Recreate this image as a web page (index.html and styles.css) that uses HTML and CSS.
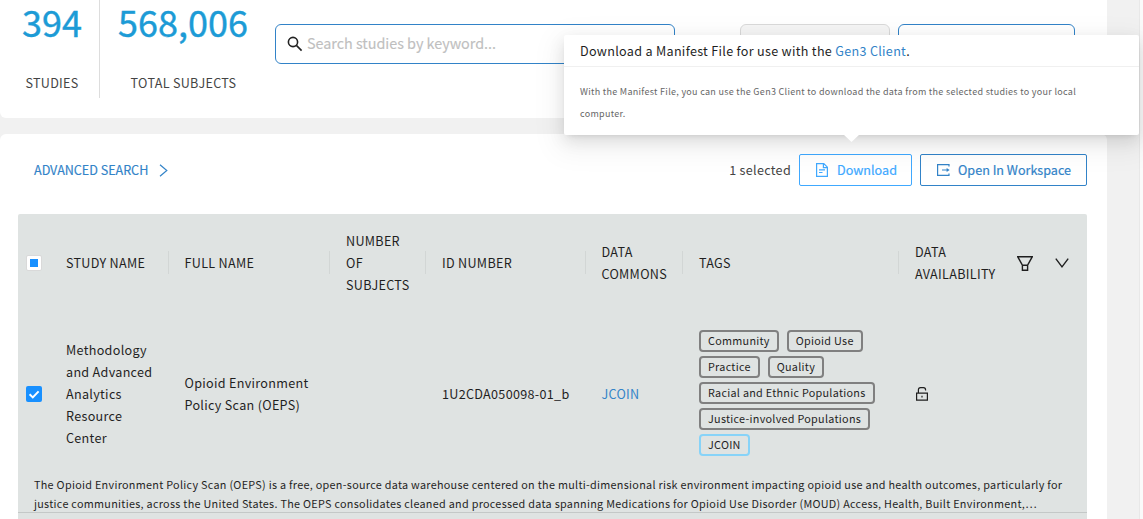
FILE: index.html
```html
<!DOCTYPE html>
<html lang="en">
<head>
<meta charset="utf-8">
<title>Study Discovery</title>
<link rel="stylesheet" href="styles.css">
</head>
<body>
<div class="page">
  <main class="content">
    <header class="summary">
      <div class="stat stat-studies"><div class="stat-number">394</div><div class="stat-label">STUDIES</div></div>
      <div class="stat stat-subjects"><div class="stat-number">568,006</div><div class="stat-label">TOTAL SUBJECTS</div></div>
      <div class="search-box">
        <svg class="icon-search" width="16" height="16" viewBox="0 0 16 16"><circle cx="6" cy="6" r="4.6"/><path d="M9.4 9.4L14.6 14.6"/></svg>
        <span class="placeholder">Search studies by keyword...</span>
      </div>
      <div class="summary-button is-disabled"></div>
      <div class="summary-button is-active"></div>
    </header>

    <section class="studies">
      <div class="toolbar">
        <a class="advanced">ADVANCED SEARCH <svg width="9" height="13" viewBox="0 0 9 13"><path d="M1 .8L7.8 6.5L1 12.2"/></svg></a>
        <div class="actions">
          <span class="selected-count">1 selected</span>
          <button class="btn btn-download"><svg width="12" height="14" viewBox="0 0 12 14"><path d="M.6 .6H7.8L11.4 4.2V13.4H.6ZM7.4 .8V4.6H11.2M3 6.9H9M3 9.5H6.5"/></svg><span>Download</span></button>
          <button class="btn btn-workspace"><svg width="13" height="12" viewBox="0 0 13 12"><path d="M12 2.6V.6H.6V11.4H12V9.4M5 6H11"/><path class="solid" d="M9.6 4L12.6 6L9.6 8Z"/></svg><span>Open In Workspace</span></button>
        </div>
      </div>

      <div class="table">
        <div class="row head">
          <div class="cell check"><span class="box partial"></span></div>
          <div class="cell split"><span>STUDY NAME</span></div>
          <div class="cell split"><span>FULL NAME</span></div>
          <div class="cell split"><span>NUMBER<br>OF<br>SUBJECTS</span></div>
          <div class="cell split"><span>ID NUMBER</span></div>
          <div class="cell split"><span>DATA<br>COMMONS</span></div>
          <div class="cell split"><span>TAGS</span></div>
          <div class="cell"><span>DATA<br>AVAILABILITY</span></div>
          <div class="cell tools">
            <svg class="icon-filter" width="16" height="15" viewBox="0 0 16 15"><path d="M.7 .7H15.3L10.6 9.2V14.3H5.4V9.2ZM5.4 9.2H10.6"/></svg>
            <svg class="icon-down" width="14" height="10" viewBox="0 0 14 10"><path d="M.8 .6L7 8.8L13.2 .6"/></svg>
          </div>
        </div>
        <div class="row body">
          <div class="cell check"><span class="box checked"><svg width="16" height="16" viewBox="0 0 16 16"><path d="M3.6 8.3L6.8 11.4L12.6 5.4"/></svg></span></div>
          <div class="cell"><span>Methodology<br>and Advanced<br>Analytics<br>Resource<br>Center</span></div>
          <div class="cell"><span>Opioid Environment<br>Policy Scan (OEPS)</span></div>
          <div class="cell"></div>
          <div class="cell"><span>1U2CDA050098-01_b</span></div>
          <div class="cell"><a class="link">JCOIN</a></div>
          <div class="cell tags">
            <span class="tag">Community</span><span class="tag">Opioid Use</span><span class="tag">Practice</span><span class="tag">Quality</span><span class="tag">Racial and Ethnic Populations</span><span class="tag">Justice-involved Populations</span><span class="tag tag-commons">JCOIN</span>
          </div>
          <div class="cell lock"><svg width="12" height="14" viewBox="0 0 12 14"><path d="M.6 6.2H11.4V13.2H.6ZM2.4 6.2V3Q2.4 .7 4.5 .7H7.5Q9.6 .7 9.6 3V3.6M6 8.8V10.4"/></svg></div>
          <div class="cell"></div>
        </div>
        <div class="description">
          <div>The Opioid Environment Policy Scan (OEPS) is a free, open-source data warehouse centered on the multi-dimensional risk environment impacting opioid use and health outcomes, particularly for</div>
          <div>justice communities, across the United States. The OEPS consolidates cleaned and processed data spanning Medications for Opioid Use Disorder (MOUD) Access, Health, Built Environment,…</div>
        </div>
      </div>
    </section>
  </main>
  <aside class="scroll-track"></aside>
</div>

<div class="popover">
  <div class="popover-title">Download a Manifest File for use with the <a class="link">Gen3 Client</a>.</div>
  <div class="popover-body"><div>With the Manifest File, you can use the Gen3 Client to download the data from the selected studies to your local</div><div>computer.</div></div>
  <div class="popover-arrow"></div>
</div>
</body>
</html>
```
FILE: styles.css
```css
* { box-sizing: border-box; }
body { margin: 0; width: 1143px; height: 519px; overflow: hidden; background: #f1f1f1; color: #1f1f1f; font: 12.6px/22px "Noto Sans CJK SC", "Open Sans", sans-serif; letter-spacing: .3px; }
svg { display: block; fill: none; stroke: currentColor; stroke-width: 1.2; flex: none; }
.page { display: flex; justify-content: space-between; height: 519px; }
.content { width: 1107px; display: flex; flex-direction: column; gap: 16px; }
.scroll-track { width: 4px; background: #fafafa; border-left: 1px solid #e8e8e8; }
.link { color: #3283c8; }

.summary { display: flex; height: 118px; background: #fff; border-radius: 0 0 6px 6px; }
.stat { height: 98px; text-align: center; white-space: nowrap; }
.stat-studies { width: 100px; padding-left: 5px; border-right: 1px solid #ddd; }
.stat-subjects { width: 167px; }
.stat-number { height: 46px; font-size: 36px; line-height: 42px; letter-spacing: 0; color: #1c9bd6; -webkit-text-stroke: .4px currentColor; }
.stat-subjects .stat-number { padding-right: 1px; }
.stat-label { margin-top: 26px; color: #444; }
.search-box { width: 400px; height: 40px; margin: 24px 0 0 8px; padding-left: 11px; display: flex; align-items: center; gap: 4px; border: 1px solid #3283c8; border-radius: 6px; }
.icon-search { stroke-width: 1.6; color: #222; }
.placeholder { font-size: 14.4px; line-height: 20px; margin-top: -2px; letter-spacing: -.03px; color: #bfbfbf; -webkit-text-stroke: .15px currentColor; }
.summary-button { height: 40px; margin-top: 24px; border: 1px solid #d9d9d9; border-radius: 6px; }
.is-disabled { width: 150px; margin-left: 65px; background: #f5f5f5; }
.is-active { width: 177px; margin-left: 8px; border-color: #3283c8; }

.studies { height: 385px; padding: 20px 20px 0 18px; background: #fff; border-radius: 6px 6px 0 0; }
.toolbar { display: flex; justify-content: space-between; align-items: center; height: 32px; padding-left: 16px; }
.advanced { display: flex; align-items: center; gap: 11px; color: #3283c8; letter-spacing: -.03px; -webkit-text-stroke: .15px currentColor; }
.actions { display: flex; align-items: center; gap: 8px; }
.selected-count { color: #444; }
.btn { display: flex; align-items: center; gap: 8px; height: 32px; padding: 0 0 0 16px; font: inherit; letter-spacing: 0; white-space: nowrap; background: transparent; border: 1px solid currentColor; border-radius: 2px; -webkit-text-stroke: .2px currentColor; }
.btn .solid { fill: currentColor; stroke: none; }
.btn-download { width: 113px; color: #40a9ff; gap: 9px; }
.btn-workspace { width: 167px; color: #3283c8; }

.table { margin-top: 28px; height: 305px; background: #dfe3e2; border-radius: 2px 2px 0 0; }
.row { display: grid; grid-template-columns: 32px 118.5px 161.5px 96px 159.5px 97.5px 216px 108px 80px; align-items: center; }
.head { height: 98px; }
.body { height: 163px; padding-top: 1px; }
.cell { position: relative; padding-left: 16px; white-space: nowrap; }
.split::after { content: ""; position: absolute; right: 0; top: 50%; height: 23px; margin-top: -12px; border-right: 1px solid #d2d6d5; }
.check { padding-left: 8px; }
.box { display: block; width: 16px; height: 16px; border-radius: 2px; }
.partial { padding: 3px; background: #fff; border: 1px solid #d9d9d9; }
.partial::before { content: ""; display: block; width: 8px; height: 8px; background: #1890ff; }
.checked { background: #1890ff; color: #fff; }
.checked svg { stroke-width: 2; }
.tools { display: flex; gap: 22px; align-items: center; padding-left: 10px; }
.tools svg { stroke-width: 1.4; }
.tags { display: flex; flex-wrap: wrap; gap: 4px 8px; padding: 0 20px 2px 16px; }
.tag { height: 22px; padding: 0 7px; border: 2px solid #808080; border-radius: 4px; font-size: 10.8px; line-height: 17px; letter-spacing: .28px; }
.tag-commons { border-color: #87d3f8; }
.lock { padding-left: 17px; }
.description { height: 38px; padding: 0 16px; border-bottom: 1px solid #c4c8c7; font-size: 10.8px; line-height: 19px; letter-spacing: .292px; white-space: nowrap; }

.popover { position: absolute; left: 564px; top: 35px; width: 575px; height: 100px; background: #fff; border-radius: 2px; box-shadow: 0 3px 6px -4px rgba(0,0,0,.16), 0 6px 16px rgba(0,0,0,.1), 0 9px 28px 8px rgba(0,0,0,.05); }
.popover-title { height: 32px; padding: 5px 16px 4px; border-bottom: 1px solid #f0f0f0; }
.popover-body { padding: 14px 16px; font-size: 9px; color: #666; white-space: nowrap; }
.popover-arrow { position: absolute; left: 279px; top: 99px; width: 17px; height: 8px; background: #fff; clip-path: polygon(0 0, 100% 0, 50% 100%); }
```
